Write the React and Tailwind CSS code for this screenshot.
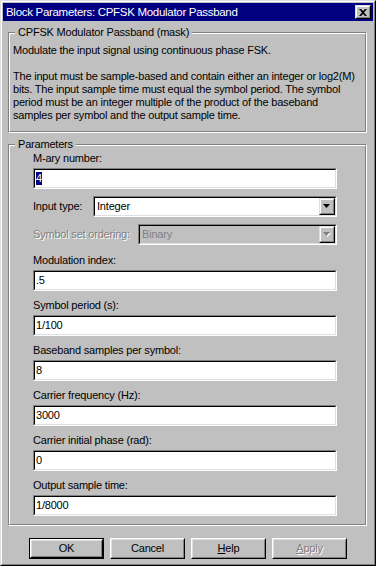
import React from "react";

const sunkenOuter = "border border-t-[#808080] border-l-[#808080] border-b-white border-r-white";
const sunkenInner = "border border-t-black border-l-black border-b-[#dfdfdf] border-r-[#dfdfdf]";
const raisedOuter = "border border-t-[#dfdfdf] border-l-[#dfdfdf] border-b-black border-r-black";
const raisedInner = "border border-t-white border-l-white border-b-[#808080] border-r-[#808080]";

function GroupBox({ title, className, children }) {
  return (
    <div className={`relative ml-[5px] w-[359px] border border-t-[#808080] border-l-[#808080] border-b-white border-r-white ${className}`}>
      <div className="h-full border border-t-white border-l-white border-b-[#808080] border-r-[#808080]">
        {children}
      </div>
      <span className="absolute left-[6px] -top-[7px] bg-[#c0c0c0] px-[3px] leading-[13px]">
        {title}
      </span>
    </div>
  );
}

function DownArrow({ disabled }) {
  return (
    <svg width="8" height="5" viewBox="0 0 8 5" className="overflow-visible">
      {disabled && <path d="M1 1h7l-3.5 4z" fill="#ffffff" />}
      <path d="M0 0h7l-3.5 4z" fill={disabled ? "#808080" : "#000000"} />
    </svg>
  );
}

function Edit({ value, selected }) {
  return (
    <div className={`h-[21px] w-[304px] ${sunkenOuter}`}>
      <div className={`h-full flex items-center bg-white pl-px ${sunkenInner}`}>
        {selected ? (
          <span className="bg-[#000080] text-white leading-[13px]">{value}</span>
        ) : (
          value
        )}
      </div>
    </div>
  );
}

function Combo({ value, disabled, width }) {
  return (
    <div className={`h-[21px] ${width} ${sunkenOuter}`}>
      <div
        className={`h-full flex items-center pl-[2px] ${sunkenInner} ${
          disabled ? "bg-[#c0c0c0] text-[#808080]" : "bg-white"
        }`}
      >
        <span className="flex-1">{value}</span>
        <div className={`h-[17px] w-[16px] ${raisedOuter} ${disabled ? "border-t-[#c0c0c0] border-l-[#c0c0c0]" : ""}`}>
          <div className={`h-full flex items-center justify-center bg-[#c0c0c0] pb-px ${raisedInner}`}>
            <DownArrow disabled={disabled} />
          </div>
        </div>
      </div>
    </div>
  );
}

function Field({ label, value, selected }) {
  return (
    <div className="flex flex-col">
      <div className="h-[20px] flex items-center">{label}</div>
      <Edit value={value} selected={selected} />
    </div>
  );
}

function Button({ children, isDefault, disabled }) {
  const face = (
    <div className={`h-full ${raisedOuter} border-t-white border-l-white`}>
      <div
        className={`h-full flex items-center justify-center border border-t-[#dfdfdf] border-l-[#dfdfdf] border-b-[#808080] border-r-[#808080] ${
          disabled ? "text-[#808080] [text-shadow:1px_1px_0_#ffffff]" : ""
        }`}
      >
        {children}
      </div>
    </div>
  );
  if (isDefault) {
    return <div className="h-[21px] w-[75px] border border-black">{face}</div>;
  }
  return <div className="h-[21px] w-[75px]">{face}</div>;
}

export default function App() {
  return (
    <div
      className="w-[376px] h-[566px] bg-[#c0c0c0] text-black text-[11px] leading-[13px] tracking-[-0.2px] whitespace-nowrap border border-t-[#dfdfdf] border-l-[#dfdfdf] border-b-black border-r-black"
      style={{ fontFamily: '"Liberation Sans", Arial, sans-serif' }}
    >
      <div className="h-full p-px border border-t-white border-l-white border-b-[#808080] border-r-[#808080]">
        {/* title bar */}
        <div className="h-[18px] bg-[#000080] text-white flex items-center pl-[3px] pr-[2px]">
          <span className="flex-1 text-[11.5px] tracking-[-0.3px]">Block Parameters: CPFSK Modulator Passband</span>
          <div className={`h-[14px] w-[16px] ${raisedOuter}`}>
            <div className={`h-full flex items-center justify-center bg-[#c0c0c0] ${raisedInner}`}>
              <svg width="8" height="7" viewBox="0 0 8 7">
                <path d="M0 0h2l2 2 2-2h2L5 3.5 8 7H6L4 5 2 7H0l3-3.5z" fill="#000" />
              </svg>
            </div>
          </div>
        </div>

        <GroupBox title="CPFSK Modulator Passband (mask)" className="mt-[11px] h-[101px]">
          <div className="pt-[10px] pl-[3px]">
            <p>Modulate the input signal using continuous phase FSK.</p>
            <p className="mt-[13px]">
              The input must be sample-based and contain either an integer or log2(M)
              <br />
              bits. The input sample time must equal the symbol period. The symbol
              <br />
              period must be an integer multiple of the product of the baseband
              <br />
              samples per symbol and the output sample time.
            </p>
          </div>
        </GroupBox>

        <GroupBox title="Parameters" className="mt-[11px] h-[382px]">
          <div className="pt-[2px] pl-[23px] flex flex-col">
            <Field label="M-ary number:" value="4" selected />
            <div className="mt-[7px] flex items-center">
              <span className="w-[60px]">Input type:</span>
              <Combo value="Integer" width="w-[244px]" />
            </div>
            <div className="mt-[7px] flex items-center">
              <span className="w-[105px] text-[#808080] [text-shadow:1px_1px_0_#ffffff]">
                Symbol set ordering:
              </span>
              <Combo value="Binary" width="w-[199px]" disabled />
            </div>
            <div className="mt-[5px] flex flex-col gap-[4px]">
              <Field label="Modulation index:" value=".5" />
              <Field label="Symbol period (s):" value="1/100" />
              <Field label="Baseband samples per symbol:" value="8" />
              <Field label="Carrier frequency (Hz):" value="3000" />
              <Field label="Carrier initial phase (rad):" value="0" />
              <Field label="Output sample time:" value="1/8000" />
            </div>
          </div>
        </GroupBox>

        <div className="mt-[12px] pl-[26px] flex gap-[6px]">
          <Button isDefault>OK</Button>
          <Button>Cancel</Button>
          <Button>
            <span>
              <span className="underline">H</span>elp
            </span>
          </Button>
          <Button disabled>
            <span>
              <span className="underline">A</span>pply
            </span>
          </Button>
        </div>
      </div>
    </div>
  );
}
